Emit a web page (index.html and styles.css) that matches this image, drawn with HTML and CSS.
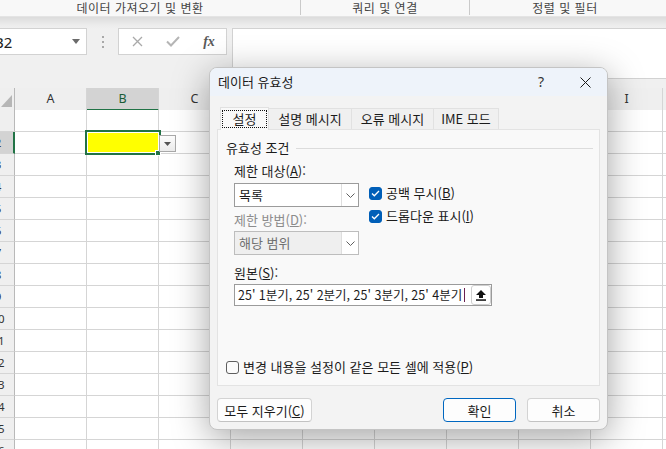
FILE: index.html
```html
<!DOCTYPE html>
<html lang="ko">
<head>
    <meta charset="UTF-8">
    <meta name="viewport" content="width=device-width, initial-scale=1.0">
    <title>데이터 유효성</title>
    <link rel="stylesheet" href="styles.css">
</head>
<body>
    <!-- 리본 그룹 이름 -->
    <div class="ribbon">
        <div class="group g1">데이터 가져오기 및 변환</div>
        <div class="group g2">쿼리 및 연결</div>
        <div class="group g3">정렬 및 필터</div>
    </div>

    <!-- 이름 상자 + 수식 입력줄 -->
    <div class="formula-area">
        <div class="namebox">
            <span>B2</span>
            <svg width="8" height="5" viewBox="0 0 8 5"><path d="M0 0h8L4 5z" fill="#6b6b6b"/></svg>
        </div>
        <div class="grip"><i></i><i></i><i></i></div>
        <div class="fx-buttons">
            <span><svg width="11" height="11" viewBox="0 0 11 11"><path d="M1 1l9 9M10 1l-9 9" stroke="#a9a9a9" stroke-width="1.3" fill="none"/></svg></span>
            <span><svg width="14" height="11" viewBox="0 0 14 11"><path d="M1 5.5l4 4 8-8.5" stroke="#b5b5b5" stroke-width="2" fill="none"/></svg></span>
            <span class="fx">fx</span>
        </div>
        <div class="formula-input"></div>
    </div>

    <!-- 시트 -->
    <div class="sheet">
        <div class="row head">
            <div class="corner"><svg width="11" height="12" viewBox="0 0 11 12"><path d="M11 0V12H0z" fill="#b6b6b6"/></svg></div>
            <div>A</div><div class="sel">B</div><div>C</div><div>D</div><div>E</div><div>F</div><div>G</div><div>H</div><div>I</div><div>J</div>
        </div>
        <div class="row"><div class="rh"><span>1</span></div><div></div><div></div><div></div><div></div><div></div><div></div><div></div><div></div><div></div><div></div></div>
        <div class="row">
            <div class="rh sel"><span>2</span></div>
            <div></div>
            <div class="cell-b2">
                <span class="selection"></span>
                <span class="fill-handle"></span>
                <span class="list-button"><svg width="7" height="4" viewBox="0 0 7 4"><path d="M0 0h7L3.5 4z" fill="#555"/></svg></span>
            </div>
            <div></div><div></div><div></div><div></div><div></div><div></div><div></div><div></div>
        </div>
        <div class="row"><div class="rh"><span>3</span></div><div></div><div></div><div></div><div></div><div></div><div></div><div></div><div></div><div></div><div></div></div>
        <div class="row"><div class="rh"><span>4</span></div><div></div><div></div><div></div><div></div><div></div><div></div><div></div><div></div><div></div><div></div></div>
        <div class="row"><div class="rh"><span>5</span></div><div></div><div></div><div></div><div></div><div></div><div></div><div></div><div></div><div></div><div></div></div>
        <div class="row"><div class="rh"><span>6</span></div><div></div><div></div><div></div><div></div><div></div><div></div><div></div><div></div><div></div><div></div></div>
        <div class="row"><div class="rh"><span>7</span></div><div></div><div></div><div></div><div></div><div></div><div></div><div></div><div></div><div></div><div></div></div>
        <div class="row"><div class="rh"><span>8</span></div><div></div><div></div><div></div><div></div><div></div><div></div><div></div><div></div><div></div><div></div></div>
        <div class="row"><div class="rh"><span>9</span></div><div></div><div></div><div></div><div></div><div></div><div></div><div></div><div></div><div></div><div></div></div>
        <div class="row"><div class="rh"><span>10</span></div><div></div><div></div><div></div><div></div><div></div><div></div><div></div><div></div><div></div><div></div></div>
        <div class="row"><div class="rh"><span>11</span></div><div></div><div></div><div></div><div></div><div></div><div></div><div></div><div></div><div></div><div></div></div>
        <div class="row"><div class="rh"><span>12</span></div><div></div><div></div><div></div><div></div><div></div><div></div><div></div><div></div><div></div><div></div></div>
        <div class="row"><div class="rh"><span>13</span></div><div></div><div></div><div></div><div></div><div></div><div></div><div></div><div></div><div></div><div></div></div>
        <div class="row"><div class="rh"><span>14</span></div><div></div><div></div><div></div><div></div><div></div><div></div><div></div><div></div><div></div><div></div></div>
        <div class="row"><div class="rh"><span>15</span></div><div></div><div></div><div></div><div></div><div></div><div></div><div></div><div></div><div></div><div></div></div>
        <div class="row"><div class="rh"><span>16</span></div><div></div><div></div><div></div><div></div><div></div><div></div><div></div><div></div><div></div><div></div></div>
    </div>

    <!-- 데이터 유효성 대화 상자 -->
    <div class="dialog">
        <div class="titlebar">
            <span class="title">데이터 유효성</span>
            <span class="tb-btn help">?</span>
            <span class="tb-btn"><svg width="11" height="11" viewBox="0 0 11 11"><path d="M0.5 0.5l10 10M10.5 0.5l-10 10" stroke="#1a1a1a" stroke-width="1" fill="none"/></svg></span>
        </div>
        <div class="dialog-body">
            <div class="tabs">
                <div class="tab active"><span>설정</span></div>
                <div class="tab t2">설명 메시지</div>
                <div class="tab t3">오류 메시지</div>
                <div class="tab t4">IME 모드</div>
            </div>
            <div class="panel">
                <div class="legend"><span>유효성 조건</span><i></i></div>
                <div class="criteria">
                    <div class="col-left">
                        <div class="label">제한 대상(<u>A</u>):</div>
                        <div class="select">
                            <span>목록</span>
                            <b><svg width="9" height="5" viewBox="0 0 9 5"><path d="M0.5 0.5l4 4 4-4" stroke="#5f5f5f" fill="none"/></svg></b>
                        </div>
                        <div class="label disabled">제한 방법(<u>D</u>):</div>
                        <div class="select disabled">
                            <span>해당 범위</span>
                            <b><svg width="9" height="5" viewBox="0 0 9 5"><path d="M0.5 0.5l4 4 4-4" stroke="#5f5f5f" fill="none"/></svg></b>
                        </div>
                    </div>
                    <div class="col-right">
                        <div class="check">
                            <span class="box on"><svg width="9" height="7" viewBox="0 0 9 7"><path d="M1 3.5l2.3 2.3L8 1" stroke="#fff" stroke-width="1.3" fill="none"/></svg></span>
                            <span>공백 무시(<u>B</u>)</span>
                        </div>
                        <div class="check">
                            <span class="box on"><svg width="9" height="7" viewBox="0 0 9 7"><path d="M1 3.5l2.3 2.3L8 1" stroke="#fff" stroke-width="1.3" fill="none"/></svg></span>
                            <span>드롭다운 표시(<u>I</u>)</span>
                        </div>
                    </div>
                </div>
                <div class="source">
                    <div class="label">원본(<u>S</u>):</div>
                    <div class="input">
                        <span>25' 1분기, 25' 2분기, 25' 3분기, 25' 4분기</span>
                        <i class="caret"></i>
                        <span class="pick"><svg width="10" height="11" viewBox="0 0 10 11"><path d="M5 0l5 5H7v3H3V5H0z" fill="#111"/><rect x="0" y="9.3" width="10" height="1.5" fill="#111"/></svg></span>
                    </div>
                </div>
                <div class="check apply">
                    <span class="box"></span>
                    <span>변경 내용을 설정이 같은 모든 셀에 적용(<u>P</u>)</span>
                </div>
            </div>
            <div class="buttons">
                <button class="clear">모두 지우기(<u>C</u>)</button>
                <button class="primary">확인</button>
                <button>취소</button>
            </div>
        </div>
    </div>
</body>
</html>
```

FILE: styles.css
```css
/* 전체 */
body {
    margin: 0;
    width: 666px;
    height: 449px;
    overflow: hidden;
    position: relative;
    background: #f0f0f0;
    font-family: "Noto Sans CJK KR", "Noto Sans", sans-serif;
    color: #1b1b1b;
}

/* 리본 그룹 이름 줄 */
.ribbon {
    display: flex;
    height: 16px;
    background: #f8f8f8;
    border-bottom: 1px solid #e4e4e4;
    font-size: 12px;
    letter-spacing: 0.5px;
    line-height: 15px;
    color: #454545;
    white-space: nowrap;
}

.group {
    flex: none;
    height: 15px;
    text-align: center;
    border-right: 1px solid #cacaca;
}

.g1 { width: 301px; padding-right: 20px; box-sizing: border-box; }
.g2 { width: 168px; }
.g3 { width: 190px; border-right: none; }

/* 수식 입력줄 영역 */
.formula-area {
    display: flex;
    align-items: flex-start;
    height: 71px;
    box-sizing: border-box;
    padding-top: 11px;
    background: linear-gradient(#dcdcdc, #ececec 8px, #f0f0f0 12px);
}

.namebox {
    flex: none;
    width: 100px;
    height: 27px;
    margin-left: -13px;
    box-sizing: border-box;
    padding: 0 6px;
    display: flex;
    align-items: center;
    justify-content: space-between;
    background: #fff;
    border: 1px solid #d2d2d2;
    font-family: "Noto Sans", sans-serif;
    font-size: 15px;
    color: #222;
}

.grip {
    flex: none;
    width: 31px;
    height: 27px;
    display: flex;
    flex-direction: column;
    align-items: center;
    justify-content: center;
    gap: 3px;
}

.grip i {
    width: 2px;
    height: 2px;
    background: #a8a8a8;
}

.fx-buttons {
    flex: none;
    width: 109px;
    height: 27px;
    box-sizing: border-box;
    display: grid;
    grid-template-columns: repeat(3, 36px);
    align-items: center;
    justify-items: center;
    background: #fff;
    border: 1px solid #d2d2d2;
}

.fx-buttons span {
    display: flex;
}

.fx {
    font-family: "Liberation Serif", serif;
    font-style: italic;
    font-weight: bold;
    font-size: 14px;
    line-height: 14px;
    color: #5a5a5a;
}

.formula-input {
    flex: 1;
    height: 49px;
    margin-left: 5px;
    background: #fff;
    border: 1px solid #d2d2d2;
    border-right: none;
}

/* 시트 */
.row {
    display: grid;
    grid-template-columns: 15px repeat(10, 72px);
    height: 22px;
}

.row > div {
    box-sizing: border-box;
    background: #fff;
    border-right: 1px solid #d5d5d5;
    border-bottom: 1px solid #d5d5d5;
}

.head > div {
    background: #efefef;
    border-bottom-color: #cbcbcb;
    text-align: center;
    font-family: "Noto Sans", sans-serif;
    font-size: 12.5px;
    line-height: 21px;
    color: #333;
}

.head .sel {
    background: #d3d3d3;
    border-bottom: 2px solid #217346;
    color: #185c37;
}

.head .corner {
    display: flex;
    align-items: flex-end;
    justify-content: flex-end;
    padding: 0 2px 3px 0;
    border-right-color: #b9b9b9;
}

.rh {
    overflow: hidden;
    font-family: "Noto Sans", sans-serif;
    font-size: 11.5px;
    line-height: 21px;
    color: #333;
}

.row > .rh {
    background: #efefef;
    border-right-color: #b9b9b9;
}

.rh span {
    display: block;
    width: 30px;
    margin-left: -17px;
    text-align: center;
}

.row > .rh.sel {
    background: #d3d3d3;
    border-right: 2px solid #217346;
}

/* 선택한 셀 B2 */
.row > .cell-b2 {
    position: relative;
    background: #ffff00;
}

.selection {
    position: absolute;
    left: -2px;
    top: -2px;
    width: 76px;
    height: 25px;
    box-sizing: border-box;
    border: 2px solid #217346;
    box-shadow: inset 0 0 0 1px #fff;
}

.fill-handle {
    position: absolute;
    left: 68px;
    top: 18px;
    width: 4px;
    height: 4px;
    background: #217346;
    border: 1px solid #fff;
}

.list-button {
    position: absolute;
    left: 72px;
    top: 3px;
    width: 17px;
    height: 17px;
    box-sizing: border-box;
    display: flex;
    align-items: center;
    justify-content: center;
    border: 1px solid #a9a9a9;
    background: linear-gradient(#fdfdfd, #ebebeb);
}

/* 대화 상자 */
.dialog {
    position: absolute;
    left: 209px;
    top: 67px;
    width: 399px;
    height: 363px;
    box-sizing: border-box;
    display: flex;
    flex-direction: column;
    overflow: hidden;
    background: #f3f3f3;
    border: 1px solid #c4c4c4;
    border-radius: 8px;
    box-shadow: 0 8px 36px rgba(0,0,0,0.36);
    font-size: 13px;
    line-height: 16px;
}

.titlebar {
    flex: none;
    display: flex;
    align-items: center;
    height: 28px;
    padding-left: 8px;
    background: #eef3fa;
}

.title {
    flex: 1;
}

.tb-btn {
    width: 44px;
    height: 28px;
    display: flex;
    align-items: center;
    justify-content: center;
}

.help {
    font-family: "Noto Sans", sans-serif;
    font-size: 14px;
    color: #333;
}

.dialog-body {
    flex: 1;
    display: flex;
    flex-direction: column;
    padding: 11px 7px 0 7px;
}

/* 탭 */
.tabs {
    display: flex;
    align-items: flex-end;
    padding-left: 3px;
    position: relative;
    z-index: 1;
}

.tab {
    flex: none;
    height: 21px;
    box-sizing: border-box;
    margin-left: -1px;
    background: #f0f0f0;
    border: 1px solid #e1e1e1;
    border-bottom: none;
    text-align: center;
    line-height: 19px;
    white-space: nowrap;
}

.t2 { width: 84px; }
.t3 { width: 83px; }
.t4 { width: 66px; }

.tab.active {
    width: 49px;
    height: 23px;
    margin-left: 0;
    margin-bottom: -1px;
    padding: 2px 1px 0 1px;
    background: #f9f9f9;
}

.tab.active span {
    display: block;
    border: 1px dotted #111;
    line-height: 16px;
}

/* 탭 내용 */
.panel {
    flex: none;
    height: 257px;
    box-sizing: border-box;
    display: flex;
    flex-direction: column;
    padding: 10px 6px 10px 8px;
    background: #f9f9f9;
    border: 1px solid #e3e3e3;
}

.legend {
    display: flex;
    align-items: center;
    gap: 7px;
}

.legend i {
    flex: 1;
    height: 1px;
    background: #dcdcdc;
}

.criteria {
    display: flex;
    margin-top: 7px;
    padding-left: 8px;
}

.col-left {
    width: 125px;
}

.label {
    white-space: nowrap;
}

.label.disabled {
    color: #8c8c8c;
}

.select {
    display: flex;
    height: 24px;
    margin: 4px 0 5px;
    box-sizing: border-box;
    background: #fff;
    border: 1px solid #9b9b9b;
}

.select span {
    flex: 1;
    padding-left: 4px;
    line-height: 22px;
}

.select b {
    width: 16px;
    display: flex;
    align-items: center;
    justify-content: center;
    border-left: 1px solid #dedede;
}

.select.disabled {
    margin-top: 3px;
    background: #efefef;
    border-color: #bdbdbd;
    color: #707070;
}

.select.disabled b {
    background: #fff;
}

.col-right {
    margin-left: 10px;
    padding-top: 22px;
    display: flex;
    flex-direction: column;
    gap: 7px;
}

.check {
    display: flex;
    align-items: center;
    gap: 4px;
    height: 16px;
    white-space: nowrap;
}

.box {
    flex: none;
    width: 13px;
    height: 13px;
    box-sizing: border-box;
    display: flex;
    align-items: center;
    justify-content: center;
    background: #fbfbfb;
    border: 1px solid #5e5e5e;
    border-radius: 3px;
}

.box.on {
    background: #005fb8;
    border-color: #005fb8;
}

.source {
    padding-left: 8px;
    margin-top: 5px;
}

.input {
    display: flex;
    align-items: center;
    width: 258px;
    height: 22px;
    margin-top: 3px;
    box-sizing: border-box;
    padding-left: 3px;
    background: #fff;
    border: 1px solid #9b9b9b;
    font-size: 12.5px;
    white-space: nowrap;
}

.caret {
    width: 1px;
    height: 14px;
    margin-left: 2px;
    background: #6b2150;
}

.pick {
    width: 20px;
    height: 20px;
    margin-left: auto;
    box-sizing: border-box;
    display: flex;
    align-items: center;
    justify-content: center;
    background: #fff;
    border: 1px solid #cfcfcf;
    border-radius: 3px;
}

.apply {
    margin-top: auto;
}

/* 아래 버튼 */
.buttons {
    display: flex;
    gap: 11px;
    margin-top: 12px;
}

button {
    width: 73px;
    height: 24px;
    padding: 0;
    font-family: inherit;
    font-size: 13px;
    color: #1b1b1b;
    background: #fdfdfd;
    border: 1px solid #d3d3d3;
    border-bottom-color: #c2c2c2;
    border-radius: 4px;
}

button.clear {
    width: 95px;
    margin-right: auto;
}

button.primary {
    border-color: #0067c0;
}
```
